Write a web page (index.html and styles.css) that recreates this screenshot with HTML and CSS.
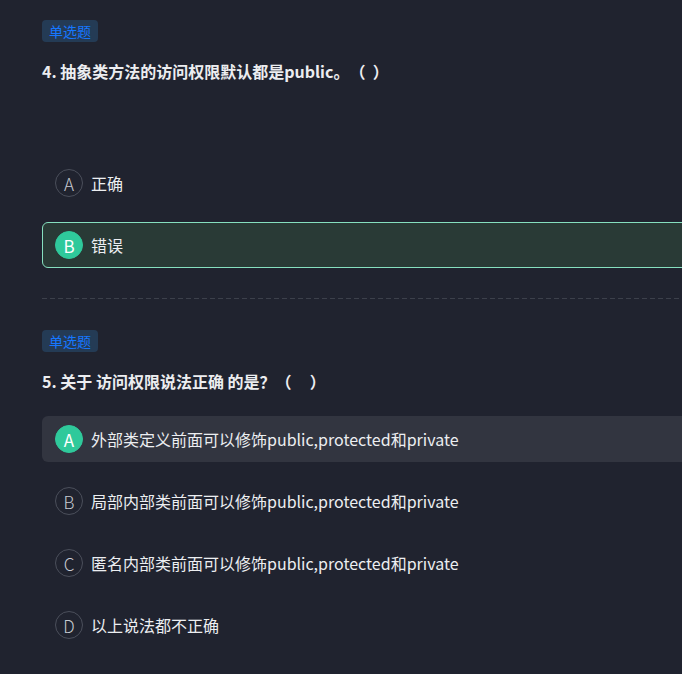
FILE: index.html
```html
<!DOCTYPE html>
<html lang="zh-CN">
<head>
<meta charset="utf-8">
<title>单选题</title>
<link rel="stylesheet" href="styles.css">
</head>
<body>
<div class="page">
  <section class="question">
    <span class="tag">单选题</span>
    <h3 class="title"><span class="num">4.</span> 抽象类方法的访问权限默认都是public。（&nbsp;&nbsp;）</h3>
    <div class="spacer"></div>
    <div class="options">
      <div class="option"><span class="letter">A</span><span class="text">正确</span></div>
      <div class="option selected"><span class="letter">B</span><span class="text">错误</span></div>
    </div>
  </section>
  <div class="divider"></div>
  <section class="question">
    <span class="tag">单选题</span>
    <h3 class="title"><span class="num">5.</span> 关于 访问权限说法正确 的是？（&nbsp;&nbsp;&nbsp;&nbsp;&nbsp;）</h3>
    <div class="options">
      <div class="option hover"><span class="letter filled">A</span><span class="text">外部类定义前面可以修饰public,protected和private</span></div>
      <div class="option"><span class="letter">B</span><span class="text">局部内部类前面可以修饰public,protected和private</span></div>
      <div class="option"><span class="letter">C</span><span class="text">匿名内部类前面可以修饰public,protected和private</span></div>
      <div class="option"><span class="letter">D</span><span class="text">以上说法都不正确</span></div>
    </div>
  </section>
</div>
</body>
</html>
```
FILE: styles.css
```css
html, body {
  margin: 0;
  padding: 0;
  overflow: hidden;
  background: #20232f;
}
body {
  font-family: "Noto Sans CJK SC", "Noto Sans", sans-serif;
  color: #e3e4e8;
  text-spacing-trim: space-all;
}
.page {
  padding: 20px 0 0 42px;
  margin-right: -24px;
}
.question {
  display: flex;
  flex-direction: column;
  align-items: flex-start;
}
.tag {
  display: inline-block;
  height: 22px;
  line-height: 22px;
  padding: 0 7px;
  font-size: 14px;
  color: #1677ff;
  background: #243b55;
  border-radius: 4px;
}
.title {
  margin: 18px 0 0;
  font-size: 16px;
  line-height: 22px;
  font-weight: 700;
  color: #ecedf0;
}
.spacer {
  height: 54px;
}
.options {
  margin-top: 24px;
  display: flex;
  flex-direction: column;
  gap: 16px;
  align-self: stretch;
}
.option {
  box-sizing: border-box;
  height: 46px;
  display: flex;
  align-items: center;
  gap: 8px;
  padding: 0 12px;
  border: 1px solid transparent;
  border-radius: 6px;
  font-size: 16px;
  color: #eceef1;
}
.option.selected {
  background: #293a36;
  border-color: #86e0bf;
}
.option.hover {
  background: #323540;
}
.letter {
  box-sizing: border-box;
  width: 28px;
  height: 28px;
  border-radius: 50%;
  border: 1px solid #4b4f5b;
  display: flex;
  align-items: center;
  justify-content: center;
  font-size: 17px;
  font-weight: 300;
  color: #c8cbd2;
  flex: none;
}
.selected .letter,
.letter.filled {
  background: #2fc99b;
  border-color: #2fc99b;
  color: #ffffff;
  font-weight: 400;
}
.divider {
  height: 1px;
  margin: 30px 0 31px;
  background: repeating-linear-gradient(to right, #3c404b 0, #3c404b 5px, transparent 5px, transparent 8px);
}
```
